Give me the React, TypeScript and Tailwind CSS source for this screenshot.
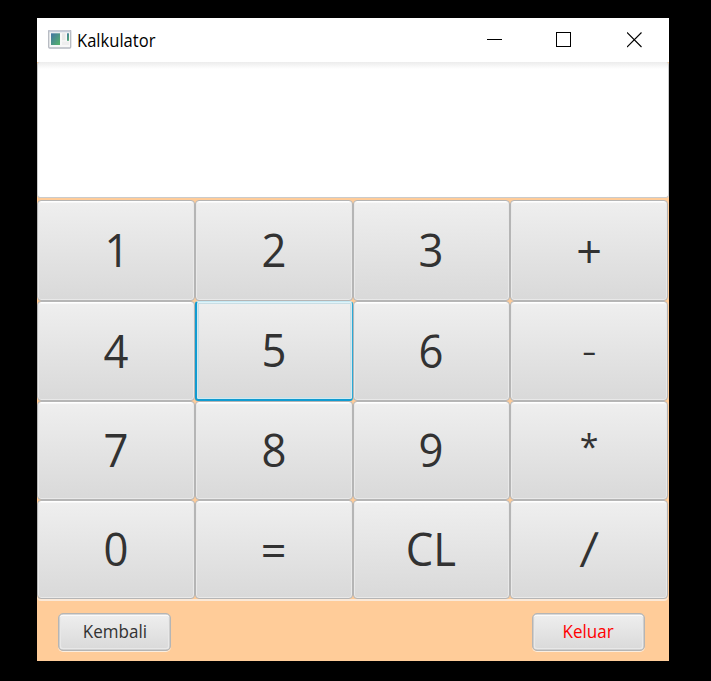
import React from "react";

type Key = { label: string; text: string; focused?: boolean };

const DIGIT = "scale-x-[0.97] -translate-y-px";

const ROWS: { height: string; keys: Key[] }[] = [
  {
    height: "h-[101px]",
    keys: [
      { label: "1", text: "scale-x-[0.97] -translate-y-px translate-x-px" },
      { label: "2", text: DIGIT },
      { label: "3", text: "scale-x-[0.97] -translate-y-px -translate-x-px" },
      { label: "+", text: "" },
    ],
  },
  {
    height: "h-[100px]",
    keys: [
      { label: "4", text: DIGIT },
      { label: "5", text: DIGIT, focused: true },
      { label: "6", text: "scale-x-[0.97] -translate-y-px -translate-x-px" },
      { label: "-", text: "scale-y-[0.7] -translate-y-[2px]" },
    ],
  },
  {
    height: "h-[99px]",
    keys: [
      { label: "7", text: DIGIT },
      { label: "8", text: DIGIT },
      { label: "9", text: "scale-x-[0.97] -translate-y-px -translate-x-px" },
      { label: "*", text: "text-[34px] -translate-y-[5px]" },
    ],
  },
  {
    height: "h-[99px]",
    keys: [
      { label: "0", text: DIGIT },
      { label: "=", text: "" },
      { label: "CL", text: "scale-x-[0.97] -translate-y-px" },
      { label: "/", text: "-skew-x-[6deg] scale-y-[1.08] -translate-y-px" },
    ],
  },
];

function CalcKey({ label, text, focused }: Key) {
  const face = focused
    ? "rounded-[3px] border-t border-r border-b-2 border-l-2 border-t-[#c5e8f3] border-l-[#109bd0] border-r-[#2ba9d6] border-b-[#109bd0] bg-linear-to-b from-[#efefef] to-[#d9d9d9] text-[#323232] shadow-[inset_0_1px_0_#dff3f9,inset_0_0_0_1px_#d5e8ee,inset_0_0_0_2px_#c8dee5]"
    : "rounded-[4px] border border-[#b5b5b5] bg-linear-to-b from-[#efefef] to-[#d9d9d9] text-[#323232] shadow-[inset_0_1px_0_#ffffff,inset_0_0_0_1px_#e9e9e9,inset_0_2px_0_#f8f8f8]";
  return (
    <button className={`flex h-full w-full items-center justify-center text-[45px] leading-none ${face}`}>
      <span className={`inline-block ${text}`}>{label}</span>
    </button>
  );
}

function FooterButton({ label, color }: { label: string; color: string }) {
  return (
    <button className="flex h-[38px] w-[113px] items-center justify-center rounded-[5px] border border-[#b5b5b5] bg-linear-to-b from-[#efefef] to-[#d9d9d9] shadow-[0_1px_0_#fbeee0,inset_0_0_0_0.5px_#b5b5b5,inset_0_2px_0_#fafafa,inset_0_0_0_2px_#e8e8e8]">
      <span className={`inline-block -translate-y-px scale-x-[0.945] text-[18px] leading-none ${color}`}>{label}</span>
    </button>
  );
}

function AppIcon() {
  return (
    <svg width="24" height="20" viewBox="0 0 24 20">
      <defs>
        <linearGradient id="pane" x1="0" y1="0" x2="1" y2="1">
          <stop offset="0" stopColor="#4273a5" />
          <stop offset="1" stopColor="#54b568" />
        </linearGradient>
      </defs>
      <rect x="0.7" y="0.2" width="22" height="17.8" rx="1" fill="#f8f8f8" stroke="#b5b9c1" strokeWidth="1.3" />
      <rect x="1" y="0.5" width="21.5" height="1.8" fill="#c5ccda" />
      <rect x="3" y="3.3" width="9" height="11.7" fill="url(#pane)" />
      <rect x="14" y="3.3" width="3.5" height="7" fill="#e8e8e8" />
      <rect x="14" y="11.5" width="7" height="3.5" fill="#eeeeee" />
      <rect x="19" y="3.3" width="2" height="7.5" fill="url(#pane)" />
    </svg>
  );
}

function TitleBar() {
  return (
    <header className="flex h-[44px] items-center bg-white pl-[11px] text-black">
      <AppIcon />
      <h1 className="ml-[5px] w-[100px] text-[18px] leading-none">
        <span className="inline-block origin-left scale-x-[0.92]">Kalkulator</span>
      </h1>
      <div className="ml-auto flex items-center pr-[26px]">
        <svg width="16" height="16" viewBox="0 0 16 16" shapeRendering="crispEdges">
          <path d="M0 7.5H15" stroke="#000" />
        </svg>
        <svg className="ml-[53px]" width="16" height="16" viewBox="0 0 16 16" shapeRendering="crispEdges">
          <path d="M.5 .5H14.5V14.5H.5Z" fill="none" stroke="#000" />
        </svg>
        <svg className="ml-[55px]" width="16" height="16" viewBox="0 0 16 16">
          <path d="M0 .5L14.5 15M14.5 .5L0 15" stroke="#000" strokeWidth="1.1" />
        </svg>
      </div>
    </header>
  );
}

export default function App() {
  return (
    <div className="h-[681px] w-[711px] overflow-hidden bg-black pt-[18px] pl-[37px] font-['Open_Sans','Noto_Sans',sans-serif]">
      <main className="flex h-[643px] w-[632px] flex-col bg-[#ffcc99]">
        <TitleBar />
        <div className="h-[136px] rounded-[3px] border-x border-b border-[#cbcbcb] bg-white bg-linear-to-b from-[#ececec] to-white to-[7px]" />
        <div className="mt-[2px] w-[631px] rounded-b-[4px] shadow-[0_2px_0_#fbe9d8]">
          {ROWS.map((row, i) => (
            <div key={i} className={`grid grid-cols-4 ${row.height}`}>
              {row.keys.map((k) => (
                <CalcKey key={k.label} {...k} />
              ))}
            </div>
          ))}
        </div>
        <footer className="mt-[14px] flex justify-between pr-[24px] pl-[21px]">
          <FooterButton label="Kembali" color="text-[#323232]" />
          <FooterButton label="Keluar" color="text-[#ff0000]" />
        </footer>
      </main>
    </div>
  );
}
